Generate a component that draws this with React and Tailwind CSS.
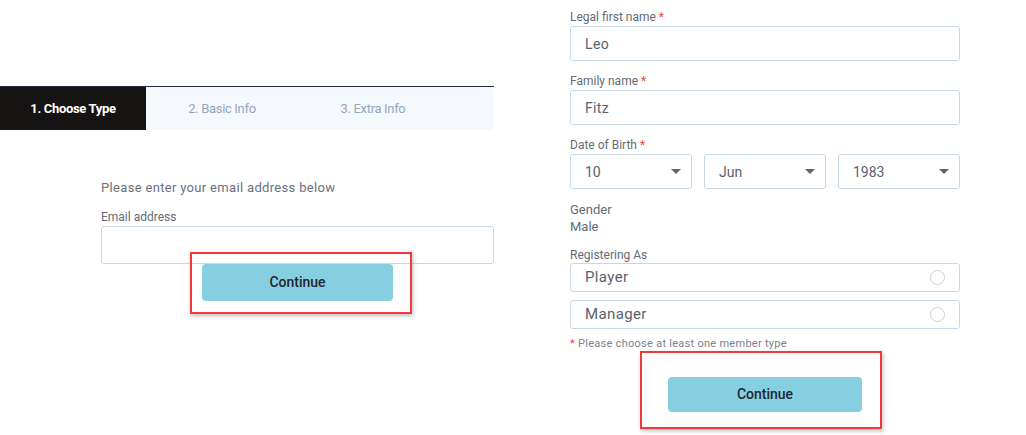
import React from 'react';

const font = { fontFamily: 'Roboto, "Noto Sans", sans-serif' };

const Caret = () => (
  <svg width="10" height="6" viewBox="0 0 10 6" className="text-[#5b6573]">
    <path d="M0 0h10L5 5z" fill="currentColor" />
  </svg>
);

const Label = ({ children, required }) => (
  <div className="text-[12px] leading-[16px] text-[#646b75]">
    {children}
    {required && <span className="text-[#e5484d]"> *</span>}
  </div>
);

const TextBox = ({ value }) => (
  <div className="h-[35px] rounded-[3px] border border-[#c9d8e6] flex items-center pt-px px-[14px] text-[14px] text-[#5a626d] tracking-wide">
    {value}
  </div>
);

const SelectBox = ({ value }) => (
  <div className="h-[35px] w-[122px] rounded-[3px] border border-[#c9d8e6] flex items-center justify-between pt-px pl-[14px] pr-[10px] text-[14px] text-[#5a626d]">
    <span>{value}</span>
    <Caret />
  </div>
);

const RadioRow = ({ label }) => (
  <div className="h-[29px] rounded-[3px] border border-[#c9d8e6] flex items-center justify-between pl-[14px] pr-[14px] text-[15px] text-[#5a626d] tracking-wide">
    <span>{label}</span>
    <span className="w-[15px] h-[15px] rounded-full border border-[#c8d0d8]" />
  </div>
);

const ContinueButton = ({ w, h }) => (
  <button className={`${w} ${h} rounded-[4px] bg-[#86cfe0] text-[14px] font-medium text-[#1f2730]`}>
    Continue
  </button>
);

const App = () => {
  return (
    <div className="w-[1026px] h-[435px] bg-white flex overflow-hidden" style={font}>
      {/* Left: step 1 */}
      <div className="w-[494px] pt-[86px] flex flex-col">
        <div className="h-[44px] border-t border-[#2a2c3e] bg-[#f5f8fc] flex text-[13px] tracking-tight">
          <div className="w-[146px] bg-[#161413] text-white font-bold flex items-center justify-center">1. Choose Type</div>
          <div className="w-[152px] text-[#96a7bd] flex items-center justify-center">2. Basic Info</div>
          <div className="w-[150px] text-[#96a7bd] flex items-center justify-center">3. Extra Info</div>
        </div>
        <div className="pl-[101px] pt-[51px]">
          <div className="text-[13px] leading-[14px] text-[#6a717b] tracking-wide">Please enter your email address below</div>
          <div className="mt-[14px]">
            <Label>Email address</Label>
          </div>
          <div className="mt-[1px] h-[38px] rounded-[3px] border border-[#c9d8e6]" />
          <div className="flex justify-center">
            <div className="relative">
              <ContinueButton w="w-[191px]" h="h-[37px]" />
              <div className="absolute -left-[12px] -top-[12px] -right-[19px] -bottom-[13px] border-2 border-[#f0393c] shadow-[1px_2px_4px_rgba(0,0,0,0.25)]" />
            </div>
          </div>
        </div>
      </div>

      {/* Right: step 2 */}
      <div className="ml-[76px] w-[390px] pt-[9px] flex flex-col">
        <Label required>Legal first name</Label>
        <div className="mt-[1px]"><TextBox value="Leo" /></div>
        <div className="mt-[12px]"><Label required>Family name</Label></div>
        <div className="mt-[1px]"><TextBox value="Fitz" /></div>
        <div className="mt-[12px]"><Label required>Date of Birth</Label></div>
        <div className="mt-[1px] flex justify-between">
          <SelectBox value="10" />
          <SelectBox value="Jun" />
          <SelectBox value="1983" />
        </div>
        <div className="mt-[13px] text-[13px] leading-[16px] text-[#646b75]">Gender</div>
        <div className="mt-[1px] text-[13px] leading-[16px] text-[#646b75]">Male</div>
        <div className="mt-[12px]"><Label>Registering As</Label></div>
        <RadioRow label="Player" />
        <div className="mt-[8px]"><RadioRow label="Manager" /></div>
        <div className="mt-[8px] text-[11px] leading-[14px] text-[#7b828c] tracking-wide">
          <span className="text-[#e5484d]">*</span> Please choose at least one member type
        </div>
        <div className="flex justify-center mt-[26px]">
          <div className="relative">
            <ContinueButton w="w-[194px]" h="h-[35px]" />
            <div className="absolute -left-[28px] -top-[26px] -right-[20px] -bottom-[17px] border-2 border-[#f0393c] shadow-[1px_2px_4px_rgba(0,0,0,0.25)]" />
          </div>
        </div>
      </div>
    </div>
  );
};

export default App;
